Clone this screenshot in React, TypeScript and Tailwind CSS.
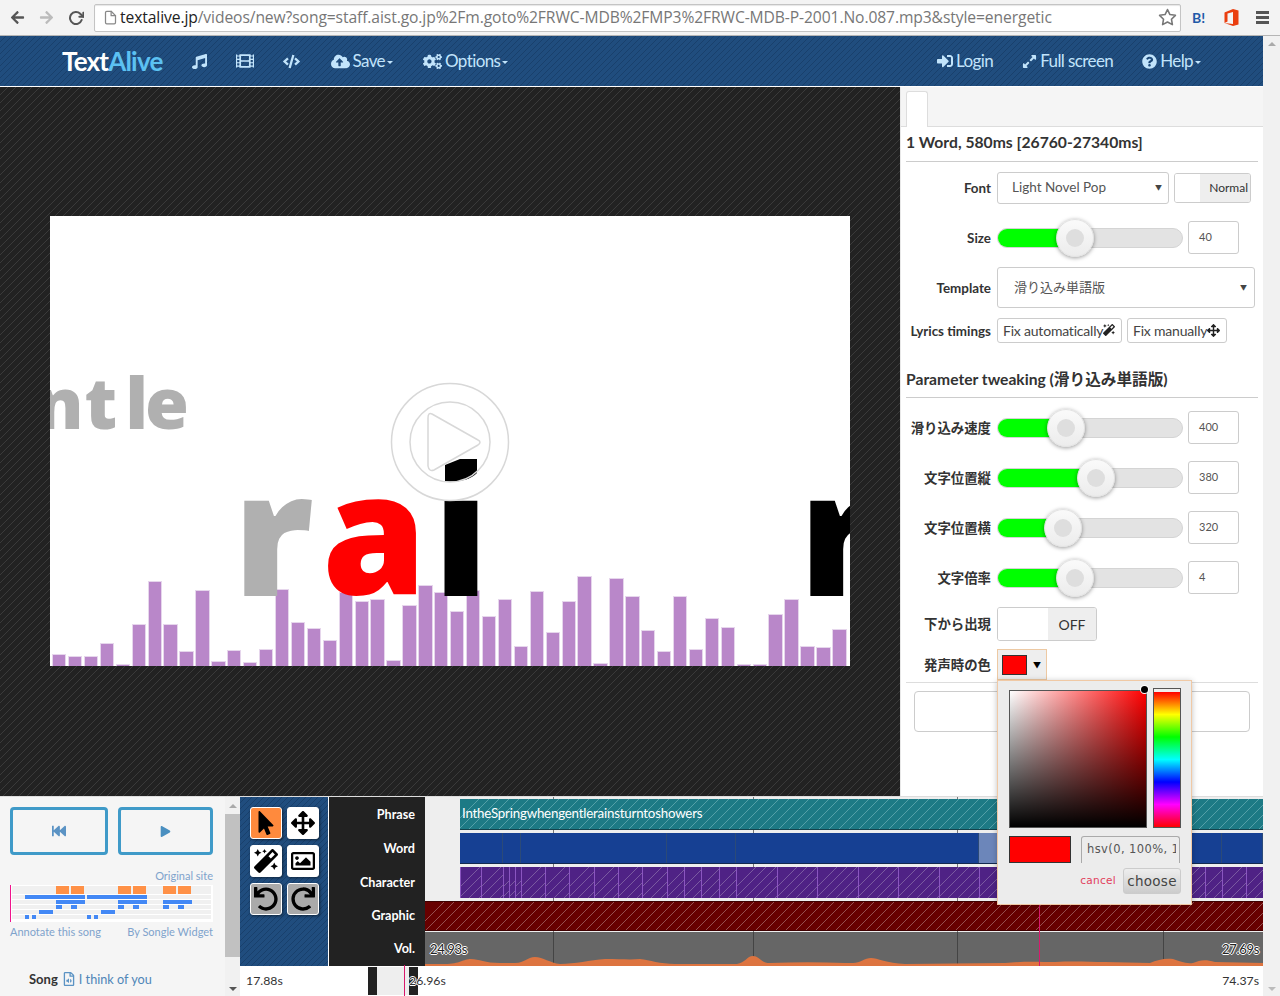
import {
  FaArrowLeft,
  FaArrowRight,
  FaArrowsAlt,
  FaCloudUploadAlt,
  FaCode,
  FaCogs,
  FaExpandAlt,
  FaFastBackward,
  FaFilm,
  FaMagic,
  FaMousePointer,
  FaMusic,
  FaPlay,
  FaQuestionCircle,
  FaRedo,
  FaRegFileAudio,
  FaRegImage,
  FaSignInAlt,
  FaUndo,
} from 'react-icons/fa';
import { FiFile, FiRotateCw, FiStar } from 'react-icons/fi';
import type { ReactNode } from 'react';

const navStripes =
  'bg-[repeating-linear-gradient(135deg,#204d7e_0,#204d7e_3.536px,#19406c_3.536px,#19406c_4.243px)]';
const darkStripes =
  'bg-[repeating-linear-gradient(135deg,#222_0,#222_4.95px,#3a3a3a_4.95px,#3a3a3a_5.657px)]';
const timeLabel =
  'absolute top-[11px] text-[13px] leading-none tracking-[-0.3px] text-[#222] [text-shadow:1px_0_0_#fff,-1px_0_0_#fff,0_1px_0_#fff,0_-1px_0_#fff]';

const bars = [
  12, 10, 10, 23, 2, 42, 85, 42, 15, 76, 5, 16, 4, 17, 77, 44, 38, 26, 74, 65, 67, 6, 61, 81, 74, 55, 76, 50, 67, 20, 75,
  34, 65, 90, 3, 88, 70, 36, 15, 70, 17, 48, 39, 2, 2, 52, 67, 20, 19, 37,
];

const wordEdges = [460, 503, 521, 667, 736, 979, 1222, 1263];
const charEdges = [
  460, 481, 503, 509, 515, 521, 545, 569, 594, 618, 642, 667, 684, 701, 719, 736, 777, 817, 858, 898, 939, 979, 1019,
  1060, 1100, 1140, 1180, 1205, 1222, 1246, 1263,
];
const gridLines = [553, 753, 957, 1163];

function NavItem({ icon, label, caret = false, className = '' }: { icon: ReactNode; label?: string; caret?: boolean; className?: string }) {
  return (
    <div className={`flex items-center text-[#c2e4fb] ${className}`}>
      {icon}
      {label && <span className="ml-[3px] text-[17px] tracking-[-0.6px]">{label}</span>}
      {caret && <span className="ml-[2px] mt-[2px] h-0 w-0 border-x-[3px] border-t-[3px] border-x-transparent border-t-[#c2e4fb]" />}
    </div>
  );
}

function Label({ children }: { children: ReactNode }) {
  return <div className="mr-[6px] mt-[2px] w-[85px] text-right text-[13.4px] leading-none font-bold whitespace-nowrap text-[#333]">{children}</div>;
}

function SliderRow({ label, value, thumb, className }: { label: string; value: string; thumb: number; className: string }) {
  return (
    <div className={`flex h-[33px] items-center ${className}`}>
      <Label>{label}</Label>
      <div className="relative h-[20px] w-[186px] rounded-full border border-[#d4d4d4] bg-[#e3e3e3]">
        <div className="h-full rounded-l-full bg-[#00ff00]" style={{ width: thumb }} />
        <div
          className="absolute top-[-10px] flex h-[38px] w-[38px] items-center justify-center rounded-full border border-[#e2e2e2] bg-[linear-gradient(to_bottom,#fafafa,#ececec)] shadow-[0_1px_4px_rgba(0,0,0,0.4)]"
          style={{ left: thumb - 19 }}
        >
          <div className="h-[18px] w-[18px] rounded-full bg-[#dedede]" />
        </div>
      </div>
      <div className="ml-[5px] flex h-[33px] w-[51px] items-center rounded-[3px] border border-[#ccc] pl-[10px] text-[11px] text-[#555]">{value}</div>
    </div>
  );
}

function ToolButton({ children, tone = 'bg-white' }: { children: ReactNode; tone?: string }) {
  return (
    <div className={`flex h-[32px] w-[32px] items-center justify-center rounded-[3px] border border-white text-[24px] text-black shadow-[1px_1px_3px_rgba(0,0,0,0.5)] ${tone}`}>
      {children}
    </div>
  );
}

function Waveform() {
  return (
    <svg className="absolute bottom-0 left-0" width="838" height="34" viewBox="0 0 838 34" aria-hidden="true">
      <path
        fill="#dd7440"
        d="M0 32 L20 32 C35 32 38 27 46 27 C54 27 60 31 75 31 L90 31 C100 31 102 25 110 25 C118 25 125 31 135 32 C150 32 165 28 180 27 C195 27 205 28 215 27 C225 28 235 32 250 32 L312 32 C320 31 322 24 328 24 C334 24 336 31 345 31 C370 30 395 30 420 31 L428 31 C435 31 440 26 446 26 C452 26 462 31 480 32 L580 31 C600 29 615 30 630 30 C650 29 665 30 680 30 L725 31 C732 28 740 26 748 27 C755 29 760 32 768 31 C775 28 780 27 790 30 L838 31 L838 34 L0 34 Z"
      />
    </svg>
  );
}

function SegmentRow({ edges, className, itemClass }: { edges: number[]; className: string; itemClass: string }) {
  return (
    <div className={`relative ml-[35px] flex ${className}`}>
      {edges.slice(0, -1).map((edge, i) => (
        <div key={edge} className={itemClass} style={{ width: edges[i + 1] - edge }} />
      ))}
    </div>
  );
}

function SongleChart() {
  const orange = [56, 71, 118, 133, 163, 178];
  const rows: [number, number, number][] = [
    [25, 60, 897], [87, 60, 897],
    [56, 29, 902], [118, 29, 902], [163, 29, 902],
    [56, 6, 907], [71, 6, 907], [118, 6, 907], [133, 6, 907], [163, 6, 907], [178, 6, 907],
    [39, 14, 912], [101, 14, 912],
    [25, 4, 917], [32, 4, 917], [87, 4, 917], [94, 4, 917],
  ];
  return (
    <svg width="203" height="37" viewBox="10 887 203 37" className="mt-[3px] block" aria-hidden="true">
      <rect x="10" y="887" width="203" height="37" fill="#fff" />
      <rect x="12" y="888" width="199" height="8" fill="#f0f0f0" />
      {[897, 902, 907, 912, 917].map((y) => (
        <rect key={y} x="12" y={y} width="199" height="4" fill="#f0f0f0" />
      ))}
      <rect x="10" y="887" width="1" height="37" fill="#f0148c" />
      {orange.map((x) => (
        <rect key={x} x={x} y="888" width="13" height="8" fill="#ff9147" />
      ))}
      {rows.map(([x, w, y]) => (
        <rect key={`${x}-${y}`} x={x} y={y} width={w} height="4" fill="#4388f5" />
      ))}
    </svg>
  );
}

function ColorPopup() {
  return (
    <div className="absolute left-[997px] top-[680px] h-[225px] w-[195px] border border-[#f0c9a5] bg-[#ececec] shadow-[0_1px_6px_rgba(0,0,0,0.25)] font-['DejaVu_Sans',sans-serif]">
      <div className="relative ml-[11px] mt-[9px] flex items-start">
        <div className="h-[138px] w-[138px] border border-[#555] bg-[linear-gradient(to_top,#000,transparent),linear-gradient(to_right,#fff,#f00)]" />
        <div className="absolute left-[132px] top-[-4px] h-[7px] w-[7px] rounded-full bg-black ring-1 ring-white" />
        <div className="ml-[6px] mt-[-2px] flex h-[140px] w-[28px] flex-col border border-[#555]">
          <div className="h-[3px] bg-[#eee]" />
          <div className="flex-1 bg-[linear-gradient(to_bottom,#f00,#ff0,#0f0,#0ff,#00f,#f0f,#f00)]" />
        </div>
      </div>
      <div className="ml-[11px] mt-[8px] flex items-center">
        <div className="h-[27px] w-[62px] border border-[#333] bg-[#ff0000]" />
        <div className="ml-[10px] flex h-[27px] w-[99px] items-center overflow-hidden rounded-t-[3px] border-x border-t border-[#aaa] pl-[5px] text-[11.5px] tracking-[0.4px] whitespace-nowrap text-[#555]">
          <span className="w-[89px] overflow-hidden">hsv(0, 100%, 100%)</span>
        </div>
      </div>
      <div className="mt-[5px] flex items-center justify-end pr-[10px]">
        <span className="text-[10.5px] tracking-[0.3px] text-[#e2405c]">cancel</span>
        <div className="ml-[7px] flex h-[26px] w-[58px] items-center justify-center rounded-[3px] border border-[#ccc] bg-[linear-gradient(to_bottom,#eee,#ccc)] text-[13.5px] tracking-[0.3px] text-[#444]">choose</div>
      </div>
    </div>
  );
}

export default function App() {
  return (
    <div className="relative flex h-[996px] w-[1280px] flex-col overflow-hidden bg-white font-['Lato','Noto_Sans_CJK_JP',sans-serif]">
      {/* browser toolbar */}
      <div className="flex h-[36px] shrink-0 items-center border-b border-[#b5b5b5] bg-[#f3f3f3] pl-[10px]">
        <FaArrowLeft className="text-[15px] text-[#555]" />
        <FaArrowRight className="ml-[14px] text-[15px] text-[#bbb]" />
        <FiRotateCw className="ml-[14px] text-[16px] text-[#555]" strokeWidth={3} />
        <div className="ml-[10px] flex h-[28px] w-[1087px] shrink-0 items-center rounded-[2px] border border-[#c4c4c4] bg-white pl-[8px] shadow-[inset_0_1px_1px_rgba(0,0,0,0.1)]">
          <FiFile className="shrink-0 text-[15px] text-[#888]" />
          <span className="ml-[2px] font-['Open_Sans',sans-serif] text-[15.65px] tracking-[-0.1px] whitespace-nowrap text-[#777]">
            <span className="text-[#222]">textalive.jp</span>/videos/new?song=staff.aist.go.jp%2Fm.goto%2FRWC-MDB%2FMP3%2FRWC-MDB-P-2001.No.087.mp3&amp;style=energetic
          </span>
          <FiStar className="ml-auto mr-[3px] shrink-0 text-[19px] text-[#777]" />
        </div>
        <span className="ml-[11px] text-[14px] font-bold text-[#1f5aa8]">B!</span>
        <svg className="ml-[19px] shrink-0" width="15" height="17" viewBox="0 0 14 17" aria-hidden="true">
          <path fill="#ea3e0f" d="M0 3.5 L8.5 0 L14 1.6 V15.4 L8.5 17 L0 14 L8.5 15 V3 L3 4.5 V12.5 L0 14 Z" />
        </svg>
        <div className="ml-[17px] flex w-[13px] shrink-0 flex-col gap-[2px]">
          <div className="h-[3px] bg-[#555]" />
          <div className="h-[3px] bg-[#555]" />
          <div className="h-[3px] bg-[#555]" />
        </div>
      </div>

      <div className="flex h-[960px] min-h-0">
        <div className="flex w-[1263px] flex-col">
          {/* app navbar */}
          <div className={`flex h-[50px] shrink-0 items-center pl-[62px] pr-[62px] ${navStripes}`}>
            <div className="text-[26px] leading-none font-bold tracking-[-0.8px] text-white">
              Text<span className="text-[#5cc1f2]">Alive</span>
            </div>
            <NavItem className="ml-[29px]" icon={<FaMusic className="text-[15px]" />} />
            <NavItem className="ml-[29px]" icon={<FaFilm className="text-[18px]" />} />
            <NavItem className="ml-[29px]" icon={<FaCode className="text-[17px]" />} />
            <NavItem className="ml-[31px]" icon={<FaCloudUploadAlt className="text-[19px]" />} label="Save" caret />
            <NavItem className="ml-[30px]" icon={<FaCogs className="text-[19px]" />} label="Options" caret />
            <div className="ml-auto flex items-center">
              <NavItem icon={<FaSignInAlt className="text-[16px]" />} label="Login" />
              <NavItem className="ml-[29px]" icon={<FaExpandAlt className="text-[15px]" />} label="Full screen" />
              <NavItem className="ml-[29px]" icon={<FaQuestionCircle className="text-[15px]" />} label="Help" caret />
            </div>
          </div>
          <div className="h-px shrink-0 bg-white" />

          <div className="flex h-[709px] shrink-0">
            {/* stage */}
            <div className={`h-full w-[900px] shrink-0 pl-[50px] pt-[129px] ${darkStripes}`}>
              <div className="relative h-[450px] w-[800px] overflow-hidden bg-white font-['Open_Sans',sans-serif] font-extrabold">
                <div className="absolute bottom-0 left-[2px] flex w-[798px] items-end">
                  {bars.map((h, i) => (
                    <div key={i} className="mr-[1.6px] w-[14.33px] shrink-0 border-x border-t border-[#e6d6ec] bg-[#b987c9]" style={{ height: h }} />
                  ))}
                </div>
                <span className="absolute right-[661px] top-[136px] text-[71px] leading-[100px] font-extrabold whitespace-nowrap text-[#b0b0b0]">
                  ge<span className="mr-[1px]">n</span><span className="mr-[8px]">t</span><span className="mr-[-3px]">l</span>e
                </span>
                <span className="absolute left-[183px] top-[193px] text-[172px] leading-[240px] text-[#b0b0b0]">r</span>
                <span className="absolute left-[272px] top-[193px] text-[168px] leading-[240px] text-[#ff0000]">a</span>
                <span className="absolute left-[383px] top-[193px] text-[172px] leading-[240px] text-black">ı</span>
                <span className="absolute left-[749px] top-[193px] text-[172px] leading-[240px] text-black">r</span>
                <svg className="absolute left-[395px] top-[243px]" width="32" height="23" viewBox="0 0 32 23" aria-hidden="true">
                  <path d="M0 6 L15 0 H32 V14 C25 21 12 24 0 22 Z" fill="#000" />
                </svg>
                <svg className="absolute left-[340px] top-[166px]" width="120" height="120" viewBox="0 0 120 120" fill="none" stroke="#d8d8d8" strokeWidth="1.5" aria-hidden="true">
                  <circle cx="60" cy="60" r="58.5" />
                  <circle cx="60" cy="60" r="40" />
                  <path d="M42 32 L88 58 Q92 60 88 63 L44 88 Q39 90 38 84 V36 Q38 30 42 32 Z" />
                </svg>
              </div>
            </div>

            {/* editor panel */}
            <div className="h-full w-[363px] shrink-0 border-l border-[#e8e8e8] bg-white text-[#333]">
              <div className="flex h-[40px] items-end border-b border-[#ddd] bg-[#f5f5f5] pl-[5px]">
                <div className="mb-[-1px] h-[36px] w-[22px] rounded-t-[3px] border-x border-t border-[#ddd] bg-white" />
              </div>
              <div className="ml-[5px] flex h-[35px] w-[352px] items-center border-b border-[#ccc] pb-[3px] text-[15.7px] font-bold whitespace-nowrap">1 Word, 580ms [26760-27340ms]</div>
              <div className="ml-[5px]">
                <div className="mt-[10px] flex h-[32px] items-center">
                  <Label>Font</Label>
                  <div className="flex h-[32px] w-[172px] items-center justify-between rounded-[3px] border border-[#ccc] pb-[2px] pl-[14px] pr-[6px] text-[13.5px] text-[#555]">
                    Light Novel Pop <span className="text-[7px] text-[#444]">▼</span>
                  </div>
                  <div className="ml-[5px] flex h-[30px] w-[77px] overflow-hidden rounded-[3px] border border-[#ccc]">
                    <div className="w-[25px] bg-white" />
                    <div className="flex flex-1 items-center justify-end bg-[#eee] pr-[2px] text-[12px] text-[#333]">Normal</div>
                  </div>
                </div>
                <SliderRow className="mt-[17px]" label="Size" value="40" thumb={77} />
                <div className="mt-[13px] flex h-[41px] items-center">
                  <Label>Template</Label>
                  <div className="flex h-[41px] w-[258px] items-center justify-between rounded-[3px] border border-[#ccc] pl-[16px] pr-[7px] text-[13px] text-[#555]">
                    滑り込み単語版 <span className="text-[7px] text-[#444]">▼</span>
                  </div>
                </div>
                <div className="mt-[10px] flex h-[25px] items-center">
                  <Label>Lyrics timings</Label>
                  <div className="flex h-[25px] w-[125px] items-center rounded-[3px] border border-[#ccc] pb-[1px] pl-[5px] text-[14px] tracking-[-0.2px] whitespace-nowrap text-[#444]">
                    Fix automatically<FaMagic className="text-[12px] text-[#222]" />
                  </div>
                  <div className="ml-[5px] flex h-[25px] w-[100px] items-center rounded-[3px] border border-[#ccc] pb-[1px] pl-[5px] text-[14px] tracking-[-0.2px] whitespace-nowrap text-[#444]">
                    Fix manually<FaArrowsAlt className="text-[13px] text-[#222]" />
                  </div>
                </div>
                <div className="flex h-[55px] w-[352px] items-end border-b border-[#ccc] pb-[9px] text-[15.65px] leading-none font-bold whitespace-nowrap">Parameter tweaking (滑り込み単語版)</div>
                <SliderRow className="mt-[13px]" label="滑り込み速度" value="400" thumb={68} />
                <SliderRow className="mt-[17px]" label="文字位置縦" value="380" thumb={98} />
                <SliderRow className="mt-[17px]" label="文字位置横" value="320" thumb={65} />
                <SliderRow className="mt-[17px]" label="文字倍率" value="4" thumb={77} />
                <div className="mt-[13px] flex h-[34px] items-center">
                  <Label>下から出現</Label>
                  <div className="flex h-[34px] w-[100px] overflow-hidden rounded-[3px] border border-[#ccc]">
                    <div className="w-[50px] bg-white" />
                    <div className="flex flex-1 items-center justify-center bg-[#eee] text-[14px] text-[#333]">OFF</div>
                  </div>
                </div>
                <div className="mt-[8px] flex h-[31px] items-center">
                  <Label>発声時の色</Label>
                  <div className="flex h-[31px] w-[50px] items-center border border-[#edc9a3] bg-[#eee] pl-[4px]">
                    <div className="h-[20px] w-[25px] border border-[#333] bg-[#ff0000]" />
                    <span className="ml-[6px] text-[8px] text-black">▼</span>
                  </div>
                </div>
                <div className="mt-[2px] h-px w-[352px] bg-[#ddd]" />
                <div className="ml-[8px] mt-[8px] h-[41px] w-[336px] rounded-[4px] border border-[#ccc]" />
              </div>
            </div>
          </div>

          {/* bottom section */}
          <div className="flex min-h-0 flex-1 border-t border-[#ddd]">
            <div className="flex h-full w-[225px] shrink-0 flex-col bg-[#f5f5f5] pl-[10px] pt-[10px]">
              <div className="flex gap-[10px]">
                <div className="flex h-[48px] w-[98px] items-center justify-center rounded-[4px] border-[3px] border-[#3f9ac8] text-[14px] text-[#5b93c4]">
                  <FaFastBackward />
                </div>
                <div className="flex h-[48px] w-[95px] items-center justify-center rounded-[4px] border-[3px] border-[#3f9ac8] text-[11px] text-[#4a8fc0]">
                  <FaPlay />
                </div>
              </div>
              <div className="mt-[14px] w-[203px] text-right text-[11px] leading-[13px] text-[#7fa3cc]">Original site</div>
              <SongleChart />
              <div className="mt-[3px] flex w-[203px] justify-between text-[11px] leading-[13px] text-[#7fa3cc]">
                <span>Annotate this song</span>
                <span>By Songle Widget</span>
              </div>
              <div className="ml-[19px] mt-[33px] flex items-center text-[13px] leading-[16px]">
                <span className="font-bold text-[#333]">Song</span>
                <FaRegFileAudio className="ml-[4px] text-[14px] text-[#5b93c4]" />
                <span className="ml-[3px] text-[12.7px] text-[#4f86b8]">I think of you</span>
              </div>
            </div>

            <div className="flex h-full w-[15px] shrink-0 flex-col items-center bg-[#f1f1f1] pt-[7px]">
              <div className="h-0 w-0 border-x-[4px] border-b-[4px] border-x-transparent border-b-[#aaa]" />
              <div className="mt-[6px] h-[143px] w-full bg-[#c1c1c1]" />
              <div className="mt-auto mb-[5px] h-0 w-0 border-x-[4px] border-t-[4px] border-x-transparent border-t-[#555]" />
            </div>

            <div className="flex min-w-0 flex-1 flex-col">
              <div className="flex h-[169px] shrink-0">
                <div className={`h-full w-[89px] shrink-0 border-r border-white pl-[10px] pt-[10px] ${navStripes}`}>
                  <div className="grid grid-cols-[32px_32px] gap-x-[5px] gap-y-[6px]">
                    <ToolButton tone="bg-[#ff8a3d]"><FaMousePointer /></ToolButton>
                    <ToolButton><FaArrowsAlt /></ToolButton>
                    <ToolButton><FaMagic /></ToolButton>
                    <ToolButton><FaRegImage /></ToolButton>
                    <ToolButton tone="bg-[#aaa]"><FaUndo /></ToolButton>
                    <ToolButton tone="bg-[#aaa]"><FaRedo /></ToolButton>
                  </div>
                </div>
                <div className="flex h-full w-[96px] shrink-0 flex-col bg-[#222] pr-[10px] pt-[2px] text-right text-[12.6px] font-bold text-white">
                  <div className="flex h-[34px] items-center justify-end">Phrase</div>
                  <div className="flex h-[34px] items-center justify-end">Word</div>
                  <div className="flex h-[34px] items-center justify-end">Character</div>
                  <div className="flex h-[34px] items-center justify-end">Graphic</div>
                  <div className="flex h-[33px] items-center justify-end">Vol.</div>
                </div>
                {/* timeline tracks */}
                <div className="relative flex min-w-0 flex-1 flex-col bg-[#eee] pt-[2px]">
                  {gridLines.map((x) => (
                    <div key={x} className="absolute bottom-0 top-0 w-px bg-[#777]" style={{ left: x - 425 }} />
                  ))}
                  <div className="relative ml-[35px] flex h-[31px] items-center border-b border-[#15444d] bg-[repeating-linear-gradient(135deg,#1d7a85_0,#1d7a85_6.364px,#55a0a8_6.364px,#55a0a8_7.071px)] pl-[2px] text-[13.3px] tracking-[-0.2px] text-white">
                    IntheSpringwhengentlerainsturntoshowers
                  </div>
                  <SegmentRow
                    edges={wordEdges}
                    className="mt-[3px] h-[31px] border-b border-[#13294f]"
                    itemClass="h-full shrink-0 border-r border-[#2b4a78] bg-[#164093]"
                  />
                  <div className="absolute left-[554px] top-[36px] h-[30px] w-[41px] bg-[#6c86ba]" />
                  <SegmentRow
                    edges={charEdges}
                    className="mt-[3px] h-[31px]"
                    itemClass="h-full shrink-0 border-l border-[#8a55c0] bg-[repeating-linear-gradient(135deg,#4f2285_0,#4f2285_6.364px,#7a5aa0_6.364px,#7a5aa0_7.071px)]"
                  />
                  <div className="relative mt-[3px] h-[30px] border-y border-[#3d0000] bg-[repeating-linear-gradient(135deg,#670000_0,#670000_6.364px,#955050_6.364px,#955050_7.071px)]" />
                  <div className="absolute bottom-0 left-0 right-0 h-[34px] bg-[#666]">
                    {gridLines.map((x) => (
                      <div key={x} className="absolute bottom-0 top-0 w-px bg-[#444]" style={{ left: x - 425 }} />
                    ))}
                    <Waveform />
                    <span className={`${timeLabel} left-[5px]`}>24.93s</span>
                    <span className={`${timeLabel} right-[4px]`}>27.69s</span>
                  </div>
                  <div className="absolute bottom-0 left-[614px] top-0 w-px bg-[#d8186c]" />
                </div>
              </div>
              <div className="flex h-[30px] shrink-0 items-center bg-white text-[12.3px] text-[#333]">
                <span className="ml-[6px] w-[122px]">17.88s</span>
                <div className="relative flex h-[28px] w-[50px] items-center bg-[#222] pl-[9px]">
                  <div className="h-full w-[32px] bg-[#eee]" />
                  <div className="absolute bottom-[-1px] left-[36px] top-[-2px] w-px bg-[#d8186c]" />
                </div>
                <span className="relative ml-[-9px] [text-shadow:1px_0_0_#fff,-1px_0_0_#fff,0_1px_0_#fff,0_-1px_0_#fff]">26.96s</span>
                <span className="ml-auto mr-[4px]">74.37s</span>
              </div>
            </div>
          </div>
        </div>

        {/* page scrollbar */}
        <div className="flex w-[17px] shrink-0 flex-col items-center bg-[#f1f1f1] pt-[6px]">
          <div className="h-0 w-0 border-x-[4px] border-b-[4px] border-x-transparent border-b-[#aaa]" />
          <div className="mt-auto mb-[5px] h-0 w-0 border-x-[4px] border-t-[4px] border-x-transparent border-t-[#bbb]" />
        </div>
      </div>

      <ColorPopup />
    </div>
  );
}
